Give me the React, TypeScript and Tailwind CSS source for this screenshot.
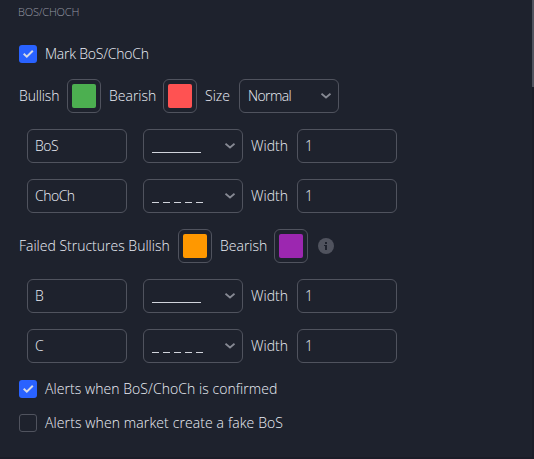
import React from "react";

function Label({ children, className = "" }: { children: React.ReactNode; className?: string }) {
  return <span className={`block shrink-0 whitespace-nowrap ${className}`}>{children}</span>;
}

function Check({ checked, label, className, labelClass }: { checked?: boolean; label: string; className: string; labelClass: string }) {
  return (
    <div className={`flex h-[18px] items-center pl-[19px] ${className}`}>
      <span
        className={`flex size-[18px] shrink-0 items-center justify-center rounded-[3px] ${
          checked ? "bg-[#2962ff]" : "border border-[#50535e]"
        }`}
      >
        {checked && (
          <svg width="18" height="18" viewBox="0 0 18 18" fill="none" stroke="#d5d9e5" strokeWidth="2">
            <path d="M4.7 8.8 7.8 11.7 13.8 5.7" />
          </svg>
        )}
      </span>
      <Label className={`ml-2 ${labelClass}`}>{label}</Label>
    </div>
  );
}

function Swatch({ color, className = "" }: { color: string; className?: string }) {
  return (
    <div className={`flex size-[34px] shrink-0 items-center justify-center rounded-[6px] border border-[#50535e] ${className}`}>
      <div className={`size-6 rounded-[2px] ${color}`} />
    </div>
  );
}

function Field({ value, className = "" }: { value: string; className?: string }) {
  return (
    <div className={`flex h-[34px] w-[100px] shrink-0 items-center rounded-[6px] border border-[#50535e] pl-[7px] tracking-[-0.5px] ${className}`}>
      {value}
    </div>
  );
}

function Select({ children, className = "" }: { children: React.ReactNode; className?: string }) {
  return (
    <div className={`flex h-[34px] w-[100px] shrink-0 items-center justify-between rounded-[6px] border border-[#50535e] pr-[7px] pl-2 ${className}`}>
      {children}
      <svg width="10" height="6" viewBox="0 0 10 6" fill="none" stroke="#868993" strokeWidth="1.8" className="-mt-px">
        <path d="M.5 .7 5 4.5 9.5 .7" />
      </svg>
    </div>
  );
}

function LineStyle({ dashed }: { dashed?: boolean }) {
  if (!dashed) return <div className="mt-3 h-px w-[49px] bg-[#d1d4dc]" />;
  return (
    <div className="mt-3 flex gap-1">
      {[0, 1, 2, 3, 4].map((i) => (
        <span key={i} className="h-px w-[7px] bg-[#d1d4dc]" />
      ))}
    </div>
  );
}

function StructureRow({ name, dashed }: { name: string; dashed?: boolean }) {
  return (
    <div className="mt-4 flex items-center pl-[27px]">
      <Field value={name} />
      <Select className="ml-4">
        <LineStyle dashed={dashed} />
      </Select>
      <Label className="ml-2 w-[46px]">Width</Label>
      <Field value="1" />
    </div>
  );
}

export default function App() {
  return (
    <div className="flex h-[459px] w-[534px] justify-between overflow-hidden border-b-2 border-[#1b1d28] bg-[#1e222d] font-['Open_Sans','Noto_Sans',sans-serif] text-[14px] leading-[18px] font-light text-[#eceff7]">
      <main>
        <h2 className="mt-1 h-4 pl-[18px] text-[11px] leading-4 font-light tracking-[-0.2px] text-[#9598a3]">BOS/CHOCH</h2>
        <Check checked label="Mark BoS/ChoCh" className="mt-[25px]" labelClass="tracking-[-0.22px]" />
        <div className="mt-4 flex items-center pl-[19px]">
          <Label className="w-12 tracking-[-0.15px]">Bullish</Label>
          <Swatch color="bg-[#4caf50]" />
          <Label className="ml-2 w-[54px]">Bearish</Label>
          <Swatch color="bg-[#ff5252]" />
          <Label className="ml-2 w-[34px]">Size</Label>
          <Select>
            <span className="tracking-[-0.6px]">Normal</span>
          </Select>
        </div>
        <StructureRow name="BoS" />
        <StructureRow name="ChoCh" dashed />
        <div className="mt-4 flex items-center pl-[19px]">
          <Label className="w-[159px]">Failed Structures Bullish</Label>
          <Swatch color="bg-[#ff9800]" />
          <Label className="ml-2 w-[54px]">Bearish</Label>
          <Swatch color="bg-[#9c27b0]" />
          <svg width="16" height="16" viewBox="0 0 16 16" className="ml-[10px]">
            <circle cx="8" cy="8" r="8" fill="#50535e" />
            <path d="M7 4h2v2H7zM6 7h3v5H7V8H6z" fill="#1e222d" />
          </svg>
        </div>
        <StructureRow name="B" />
        <StructureRow name="C" dashed />
        <Check checked label="Alerts when BoS/ChoCh is confirmed" className="mt-[17px]" labelClass="tracking-[0.06px]" />
        <Check label="Alerts when market create a fake BoS" className="mt-4" labelClass="tracking-[0.11px]" />
      </main>
      <div className="w-[2px] bg-[#1b1d28]">
        <div className="h-[87px] bg-[#50535e]" />
      </div>
    </div>
  );
}
